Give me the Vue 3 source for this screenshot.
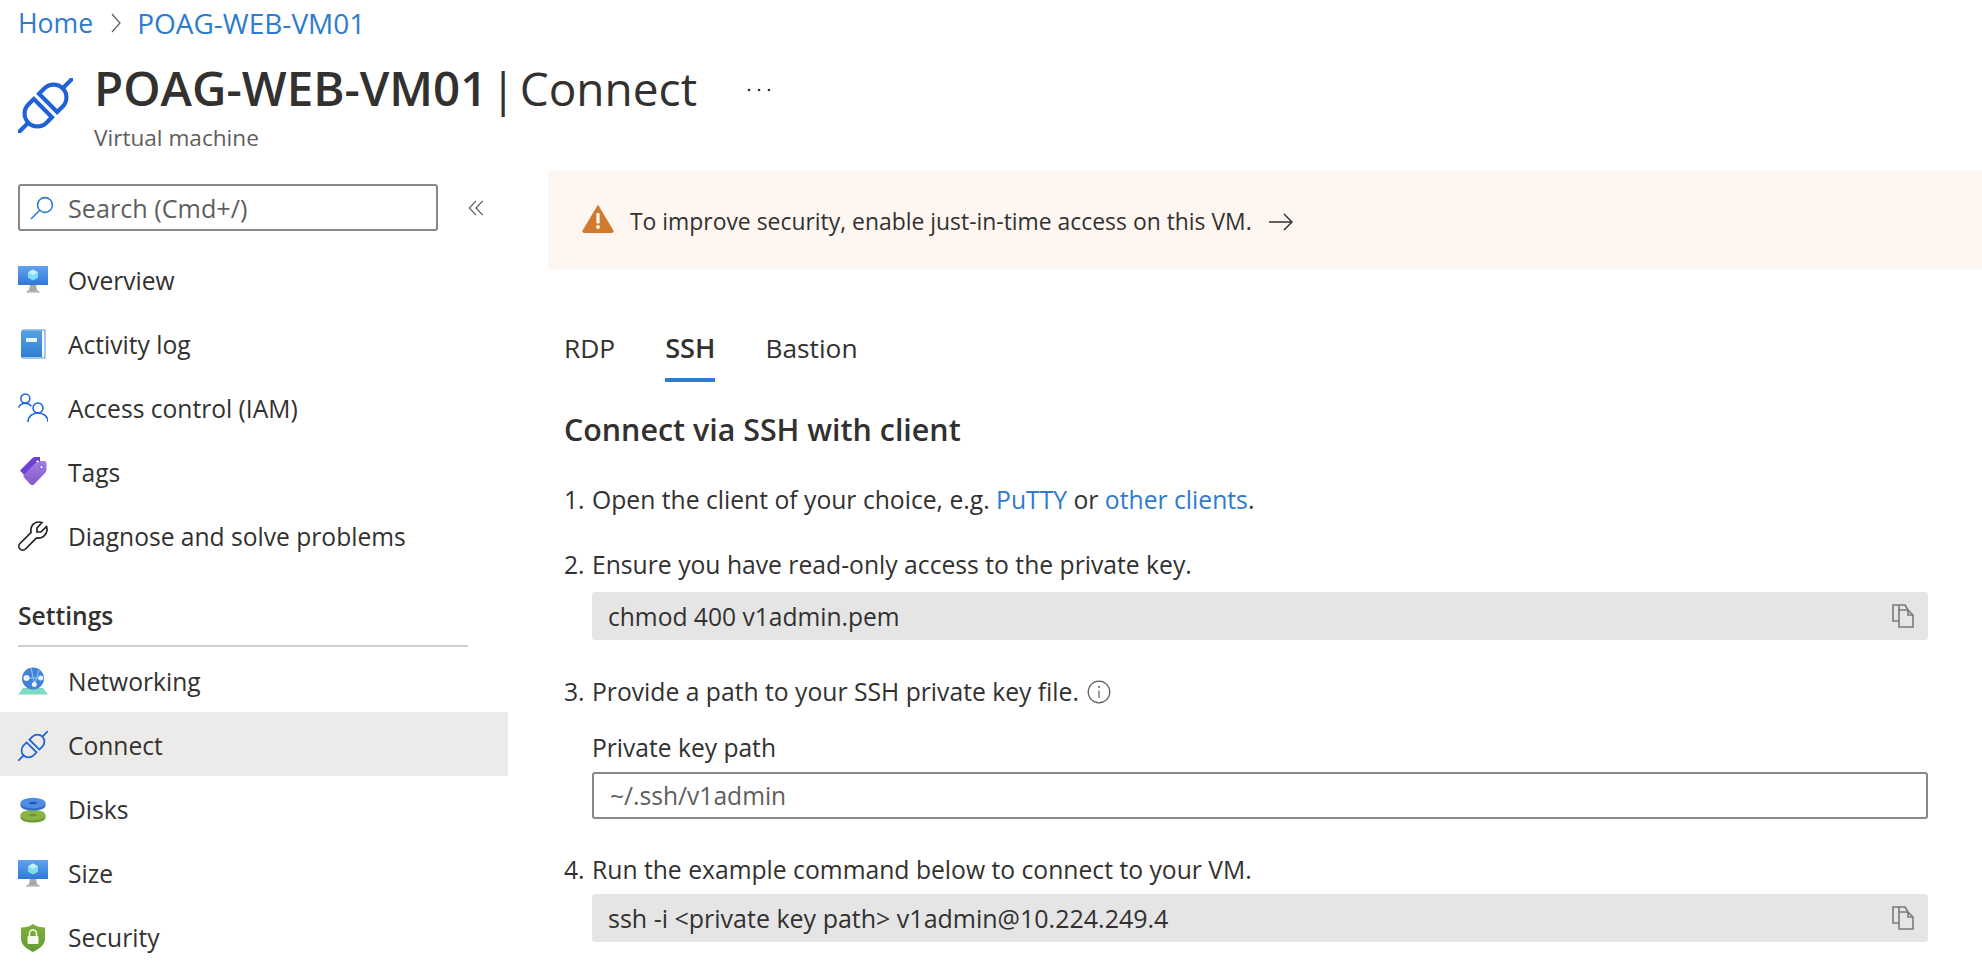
<template>
  <div class="page">
    <svg class="defs" width="0" height="0" aria-hidden="true">
      <defs>
        <linearGradient id="screenFill" x1="0" y1="0" x2="0" y2="1">
          <stop offset="0" stop-color="#62a3ee" />
          <stop offset="1" stop-color="#2f78d6" />
        </linearGradient>
        <linearGradient id="standFill" x1="0" y1="0" x2="0" y2="1">
          <stop offset="0" stop-color="#9c9c9c" />
          <stop offset="1" stop-color="#d6d6d6" />
        </linearGradient>
        <linearGradient id="bookFill" x1="0" y1="0" x2="0" y2="1">
          <stop offset="0" stop-color="#58a1e6" />
          <stop offset="1" stop-color="#2f7fd3" />
        </linearGradient>
        <linearGradient id="tagFill" x1="0" y1="0" x2="0" y2="1">
          <stop offset="0" stop-color="#a67fe6" />
          <stop offset="1" stop-color="#8159c4" />
        </linearGradient>
        <linearGradient id="shieldFill" x1="0" y1="0" x2="0" y2="1">
          <stop offset="0" stop-color="#7fb03f" />
          <stop offset="1" stop-color="#639a32" />
        </linearGradient>
      </defs>
    </svg>

    <header class="top">
      <nav class="crumbs">
        <a>Home</a>
        <svg class="crumb-sep" viewBox="0 0 12 20"><path d="M2 1l8 9-8 9" /></svg>
        <a class="crumb-vm">POAG-WEB-VM01</a>
      </nav>
      <div class="title-row">
        <svg class="title-icon" viewBox="0 0 24 24">
          <g transform="rotate(-45 12 12)" class="plug">
            <path d="M10.4 6.4H7a5.6 5.6 0 0 0 0 11.2h3.4z" />
            <path d="M13.6 6.4H17a5.6 5.6 0 0 1 0 11.2h-3.4z" />
            <path d="M-6 12h7.4M22.6 12H30" />
          </g>
        </svg>
        <div>
          <h1><b>POAG-WEB-VM01</b><span class="pipe">|</span>Connect</h1>
          <div class="subtitle">Virtual machine</div>
        </div>
        <svg class="more" viewBox="0 0 24 4"><circle cx="2" cy="2" r="1.3" /><circle cx="12" cy="2" r="1.3" /><circle cx="22" cy="2" r="1.3" /></svg>
      </div>
    </header>

    <div class="body">
      <aside class="side">
        <div class="search-row">
          <label class="search">
            <svg viewBox="0 0 24 24"><circle cx="15" cy="9" r="7.4" /><path d="M9.7 14.3L1 23" /></svg>
            <input placeholder="Search (Cmd+/)" />
          </label>
          <svg class="collapse" viewBox="0 0 18 18"><path d="M9 1L1.5 9 9 17M16.5 1L9 9l7.5 8" /></svg>
        </div>

        <a v-for="item in topItems" :key="item.label" class="nav-item">
          <span class="nav-icon">
            <svg v-if="item.icon === 'vm'" viewBox="0 0 30 30">
              <rect y="1" width="30" height="19" fill="url(#screenFill)" />
              <path d="M12 20h6l1 5h-8z" fill="#a8a8a8" />
              <path d="M8 28c0-2 2-3 4-3h6c2 0 4 1 4 3z" fill="url(#standFill)" />
              <path d="M15 4.500l5 2.800v5.400l-5 2.800-5-2.800V7.300z" fill="#7fdcf5" />
              <path d="M15 4.500l5 2.800-5 2.800-5-2.800z" fill="#c3f1fc" />
            </svg>
            <svg v-else-if="item.icon === 'book'" viewBox="0 0 30 30">
              <path d="M5 1h22v28H4z" fill="#fff" stroke="#4d94dc" stroke-width="1" />
              <path d="M3 3.500C3 2 4 1 5 1v.5h19V28H3z" fill="url(#bookFill)" />
              <rect x="8" y="9" width="11" height="4" fill="#e8f2fc" />
            </svg>
            <svg v-else-if="item.icon === 'people'" viewBox="0 0 30 30" class="people">
              <circle cx="7.300" cy="5.500" r="4.500" />
              <path d="M.7 14.500C2 11.500 4.500 10.300 7.300 10.300c2.500 0 4.700 1 6 3" />
              <circle cx="20" cy="15" r="5" />
              <path d="M10 29c0-5.500 4.500-9 10-9s10 3.500 10 9" />
            </svg>
            <svg v-else-if="item.icon === 'tag'" viewBox="0 0 30 30">
              <path d="M2 13.500L14 1.500C15 .5 16 0 17.500 0H22v7L7 19z" fill="#6f3fd6" />
              <path d="M6.500 17L18 5.500C19 4.500 20 4 21 4h5c1.500 0 2.500 1 2.500 2.500v6c0 1.500-.5 2.500-1.500 3.500L16.500 27c-1.500 1.500-3 1.500-4.500 0l-5.500-6c-1.500-1.500-1.500-2.500 0-4z" fill="url(#tagFill)" />
              <circle cx="19.500" cy="4.500" r="1.500" fill="#fff" stroke="#5a35a8" stroke-width=".6" />
              <circle cx="23.500" cy="10" r="1.600" fill="#fff" stroke="#5a35a8" stroke-width=".6" />
            </svg>
            <svg v-else viewBox="0 0 30 30" class="wrench">
              <path d="M2 22.500L13 11.500C12 6 15 1 21 1c1 0 2 .2 3 .5L19 7v4h4l5.500-5.500c.5 1.500.7 2.500.5 4-.5 4.500-5 8.500-10.500 7.500L7.500 28c-1.500 1.500-4 1.500-5.500 0s-1.500-4 0-5.500z" />
            </svg>
          </span>
          {{ item.label }}
        </a>

        <div class="section">Settings</div>

        <a v-for="item in settingItems" :key="item.label" class="nav-item low" :class="{ active: item.active }">
          <span class="nav-icon">
            <svg v-if="item.icon === 'net'" viewBox="0 0 30 30">
              <path d="M5 21h20l5 6.500H0z" fill="#7fd9c3" />
              <circle cx="15" cy="11.500" r="11" fill="#3f82da" />
              <path d="M13 1l3.500 15M9 11L22.500 11M21 3l-4 13" stroke="#a9cdf4" stroke-width=".9" fill="none" />
              <circle cx="8.500" cy="11" r="3" fill="#f1f1f1" />
              <circle cx="22.700" cy="11" r="2.500" fill="#f1f1f1" />
              <circle cx="16.300" cy="17.500" r="2.500" fill="#f1f1f1" />
            </svg>
            <svg v-else-if="item.icon === 'plug'" viewBox="0 0 24 24">
              <g transform="rotate(-45 12 12)" class="plug thin">
                <path d="M10.400 6.400H7a5.600 5.600 0 0 0 0 11.200h3.400z" />
                <path d="M13.600 6.400H17a5.600 5.600 0 0 1 0 11.200h-3.400z" />
                <path d="M-6 12h7.400M22.600 12H30" />
              </g>
            </svg>
            <svg v-else-if="item.icon === 'disk'" viewBox="0 0 30 30">
              <path d="M2.500 20v2.500C2.500 25.500 8 27.500 15 27.500s12.500-2 12.500-5V20z" fill="#6f9a34" />
              <ellipse cx="15" cy="20" rx="12.500" ry="5.300" fill="#8ab446" />
              <ellipse cx="15" cy="20" rx="4" ry="1.200" fill="#6a9431" />
              <path d="M2.500 8v2.500c0 3 5.500 5 12.500 5s12.500-2 12.500-5V8z" fill="#2f6ecb" />
              <ellipse cx="15" cy="8" rx="12.500" ry="5.300" fill="#4f8ce2" />
              <ellipse cx="15" cy="8" rx="4" ry="1.200" fill="#1f58ad" />
            </svg>
            <svg v-else-if="item.icon === 'vm'" viewBox="0 0 30 30">
              <rect y="1" width="30" height="19" fill="url(#screenFill)" />
              <path d="M12 20h6l1 5h-8z" fill="#a8a8a8" />
              <path d="M8 28c0-2 2-3 4-3h6c2 0 4 1 4 3z" fill="url(#standFill)" />
              <path d="M15 4.500l5 2.800v5.400l-5 2.800-5-2.800V7.300z" fill="#7fdcf5" />
              <path d="M15 4.500l5 2.800-5 2.800-5-2.800z" fill="#c3f1fc" />
            </svg>
            <svg v-else viewBox="0 0 30 30">
              <path d="M15 1c-3 2.500-7.500 3.500-12 3.500V16c0 6.500 7 10.500 12 13 5-2.500 12-6.500 12-13V4.500C22.500 4.500 18 3.500 15 1z" fill="url(#shieldFill)" />
              <path d="M11.500 13v-2.500a3.500 3.500 0 0 1 7 0V13" fill="none" stroke="#f4f7ec" stroke-width="1.600" />
              <rect x="9.500" y="13" width="11" height="8" rx="1" fill="#f4f7ec" />
            </svg>
          </span>
          {{ item.label }}
        </a>
      </aside>

      <main class="main">
        <div class="banner">
          <svg class="warn" viewBox="0 0 32 29">
            <path d="M16 1.500L31 26.500c.5 1 0 2-1 2H2c-1 0-1.500-1-1-2z" fill="#d17a2e" stroke="#d17a2e" stroke-linejoin="round" />
            <rect x="14.400" y="9" width="3.200" height="10.500" rx="1" fill="#fff" />
            <circle cx="16" cy="23" r="1.900" fill="#fff" />
          </svg>
          <span class="banner-text">To improve security, enable just-in-time access on this VM.</span>
          <svg class="arrow" viewBox="0 0 24 18"><path d="M0 9h23M15 1l8 8-8 8" /></svg>
        </div>

        <div class="content">
          <div class="tabs">
            <a v-for="tab in tabs" :key="tab" class="tab" :class="{ current: tab === 'SSH' }">{{ tab }}</a>
          </div>

          <h2>Connect via SSH with client</h2>

          <div class="step">
            <span class="num">1.</span>
            <div>Open the client of your choice, e.g. <a class="link">PuTTY</a> or <a class="link">other clients</a>.</div>
          </div>

          <div class="step near">
            <span class="num">2.</span>
            <div>Ensure you have read-only access to the private key.</div>
          </div>
          <div class="code roomy">
            <span>chmod 400 v1admin.pem</span>
            <svg class="copy" viewBox="0 0 22 24"><path d="M7 6.500V1H1v16h6M7 1h6l3 5" /><path d="M7 6h9l5 5v12H7zM16 6v5h5" /></svg>
          </div>

          <div class="step far">
            <span class="num">3.</span>
            <div class="with-info">
              Provide a path to your SSH private key file.
              <svg class="info" viewBox="0 0 24 24"><circle cx="12" cy="12" r="10.800" /><path d="M12 10.500V18" /><circle class="dot" cx="12" cy="7" r="1" /></svg>
            </div>
          </div>
          <label class="field-label" for="keyPath">Private key path</label>
          <input id="keyPath" class="key-input" :value="keyPath" />

          <div class="step">
            <span class="num">4.</span>
            <div>Run the example command below to connect to your VM.</div>
          </div>
          <div class="code wide">
            <span>ssh -i &lt;private key path&gt; v1admin@10.224.249.4</span>
            <svg class="copy" viewBox="0 0 22 24"><path d="M7 6.500V1H1v16h6M7 1h6l3 5" /><path d="M7 6h9l5 5v12H7zM16 6v5h5" /></svg>
          </div>
        </div>
      </main>
    </div>
  </div>
</template>

<script setup>
const topItems = [
  { label: 'Overview', icon: 'vm' },
  { label: 'Activity log', icon: 'book' },
  { label: 'Access control (IAM)', icon: 'people' },
  { label: 'Tags', icon: 'tag' },
  { label: 'Diagnose and solve problems', icon: 'wrench' },
];

const settingItems = [
  { label: 'Networking', icon: 'net' },
  { label: 'Connect', icon: 'plug', active: true },
  { label: 'Disks', icon: 'disk' },
  { label: 'Size', icon: 'vm' },
  { label: 'Security', icon: 'shield' },
];

const tabs = ['RDP', 'SSH', 'Bastion'];
const keyPath = '~/.ssh/v1admin';
</script>

<style scoped>
.page {
  height: 980px;
  overflow: hidden;
  background: #fff;
  color: #323130;
  font-family: "Open Sans", "Noto Sans", sans-serif;
  font-size: 24.6px;
}

.defs {
  position: absolute;
}

.top {
  height: 170px;
  padding-left: 18px;
  box-sizing: border-box;
}

.crumbs {
  display: flex;
  align-items: center;
  height: 46px;
  font-size: 26.6px;
  color: #2e7bd0;
}

.crumb-vm {
  font-size: 28px;
}

.crumb-sep {
  width: 12px;
  height: 20px;
  margin: 0 15px 0 17px;
  fill: none;
  stroke: #605e5c;
  stroke-width: 1.2;
}

.title-row {
  display: flex;
  align-items: flex-start;
}

.title-icon {
  width: 55px;
  height: 55px;
  margin-top: 32px;
  margin-right: 21px;
  flex: none;
}

.plug {
  fill: none;
  stroke: #1f62d6;
  stroke-width: 1.8;
}

.plug.thin {
  stroke-width: 1.4;
}

h1 {
  margin: 17px 0 0;
  font-size: 46px;
  line-height: 50px;
  font-weight: 400;
  white-space: nowrap;
}

h1 b {
  font-size: 47.5px;
  font-weight: 600;
}

.pipe {
  margin: 0 4px 0 3px;
}

.subtitle {
  margin-top: 11px;
  font-size: 22.6px;
  line-height: 28px;
  color: #605e5c;
}

.more {
  width: 24px;
  height: 4px;
  margin: 42px 0 0 50px;
  fill: #323130;
}

.body {
  display: flex;
}

.side {
  width: 508px;
  flex: none;
  padding-top: 14px;
}

.search-row {
  display: flex;
  align-items: center;
  height: 47px;
  margin: 0 0 17px 18px;
}

.search {
  display: flex;
  align-items: center;
  width: 420px;
  height: 47px;
  box-sizing: border-box;
  border: 2px solid #8a8886;
  border-radius: 3px;
}

.search svg {
  width: 24px;
  height: 24px;
  margin: 0 14px 0 10px;
  fill: none;
  stroke: #2e7bd0;
  stroke-width: 1.6;
  flex: none;
}

.search input {
  flex: 1;
  min-width: 0;
  border: 0;
  outline: 0;
  padding: 0;
  background: transparent;
  font: inherit;
  font-size: 25.2px;
  color: #605e5c;
}

.search input::placeholder {
  color: #605e5c;
  opacity: 1;
}

.collapse {
  width: 16px;
  height: 16px;
  margin-left: 30px;
  fill: none;
  stroke: #605e5c;
  stroke-width: 1.4;
}

.nav-item {
  display: flex;
  align-items: center;
  height: 64px;
  box-sizing: border-box;
  padding-left: 18px;
}

.nav-item.low {
  padding-top: 3px;
}

.nav-item.active {
  background: #edebe9;
}

.nav-icon {
  display: flex;
  width: 30px;
  height: 30px;
  margin-right: 20px;
}

.nav-icon svg {
  width: 30px;
  height: 30px;
}

.people {
  fill: none;
  stroke: #1f62d6;
  stroke-width: 1.5;
}

.wrench {
  fill: none;
  stroke: #1f1f1f;
  stroke-width: 1.7;
}

.section {
  height: 79px;
  box-sizing: border-box;
  margin: 0 40px 1px 18px;
  padding-top: 32px;
  border-bottom: 2px solid #cfcfcf;
  font-weight: 600;
  line-height: 32px;
}

.main {
  flex: 1;
  min-width: 0;
  margin-left: 40px;
}

.banner {
  display: flex;
  align-items: center;
  height: 100px;
  padding-left: 34px;
  background: #fef7f1;
  border-radius: 4px 0 0 4px;
  font-size: 22.9px;
}

.warn {
  width: 32px;
  height: 29px;
  margin: -3px 16px 0 0;
}

.banner-text {
  padding-top: 3px;
}

.arrow {
  width: 24px;
  height: 18px;
  margin: 3px 0 0 17px;
  fill: none;
  stroke: #323130;
  stroke-width: 1.5;
}

.content {
  padding: 0 54px 0 16px;
}

.tabs {
  display: flex;
  gap: 50px;
  margin-top: 50px;
}

.tab {
  height: 62px;
  box-sizing: border-box;
  line-height: 56px;
  font-size: 26.3px;
}

.tab.current {
  font-size: 27.2px;
  font-weight: 600;
  border-bottom: 4px solid #2e7bd0;
}

h2 {
  margin: 28px 0 0;
  font-size: 30.4px;
  line-height: 39px;
  font-weight: 600;
}

.step {
  display: flex;
  margin-top: 34px;
  font-size: 24.7px;
  line-height: 34px;
}

.step.near {
  margin-top: 31px;
}

.step.far {
  margin-top: 35px;
}

.num {
  width: 28px;
  flex: none;
}

.with-info {
  display: flex;
  align-items: center;
  gap: 8px;
}

.link {
  color: #2e7bd0;
}

.code {
  display: flex;
  align-items: center;
  justify-content: space-between;
  height: 48px;
  margin: 7px 0 0 28px;
  padding: 0 14px 0 16px;
  background: #e5e5e5;
  border-radius: 3px;
}

.code.roomy {
  margin-top: 10px;
}

.code.wide {
  font-size: 25px;
}

.copy {
  width: 22px;
  height: 24px;
  fill: none;
  stroke: #7a7a7a;
  stroke-width: 1.6;
}

.info {
  width: 24px;
  height: 24px;
  fill: none;
  stroke: #605e5c;
  stroke-width: 1.2;
}

.info .dot {
  fill: #605e5c;
  stroke: none;
}

.field-label {
  display: block;
  margin: 22px 0 0 28px;
  line-height: 34px;
}

.key-input {
  display: block;
  width: calc(100% - 28px);
  height: 47px;
  box-sizing: border-box;
  margin: 7px 0 0 28px;
  padding: 0 16px;
  border: 2px solid #8a8886;
  border-radius: 3px;
  outline: 0;
  font: inherit;
  color: #605e5c;
}
</style>

<style>
html,
body {
  margin: 0;
  background: #fff;
}
</style>
